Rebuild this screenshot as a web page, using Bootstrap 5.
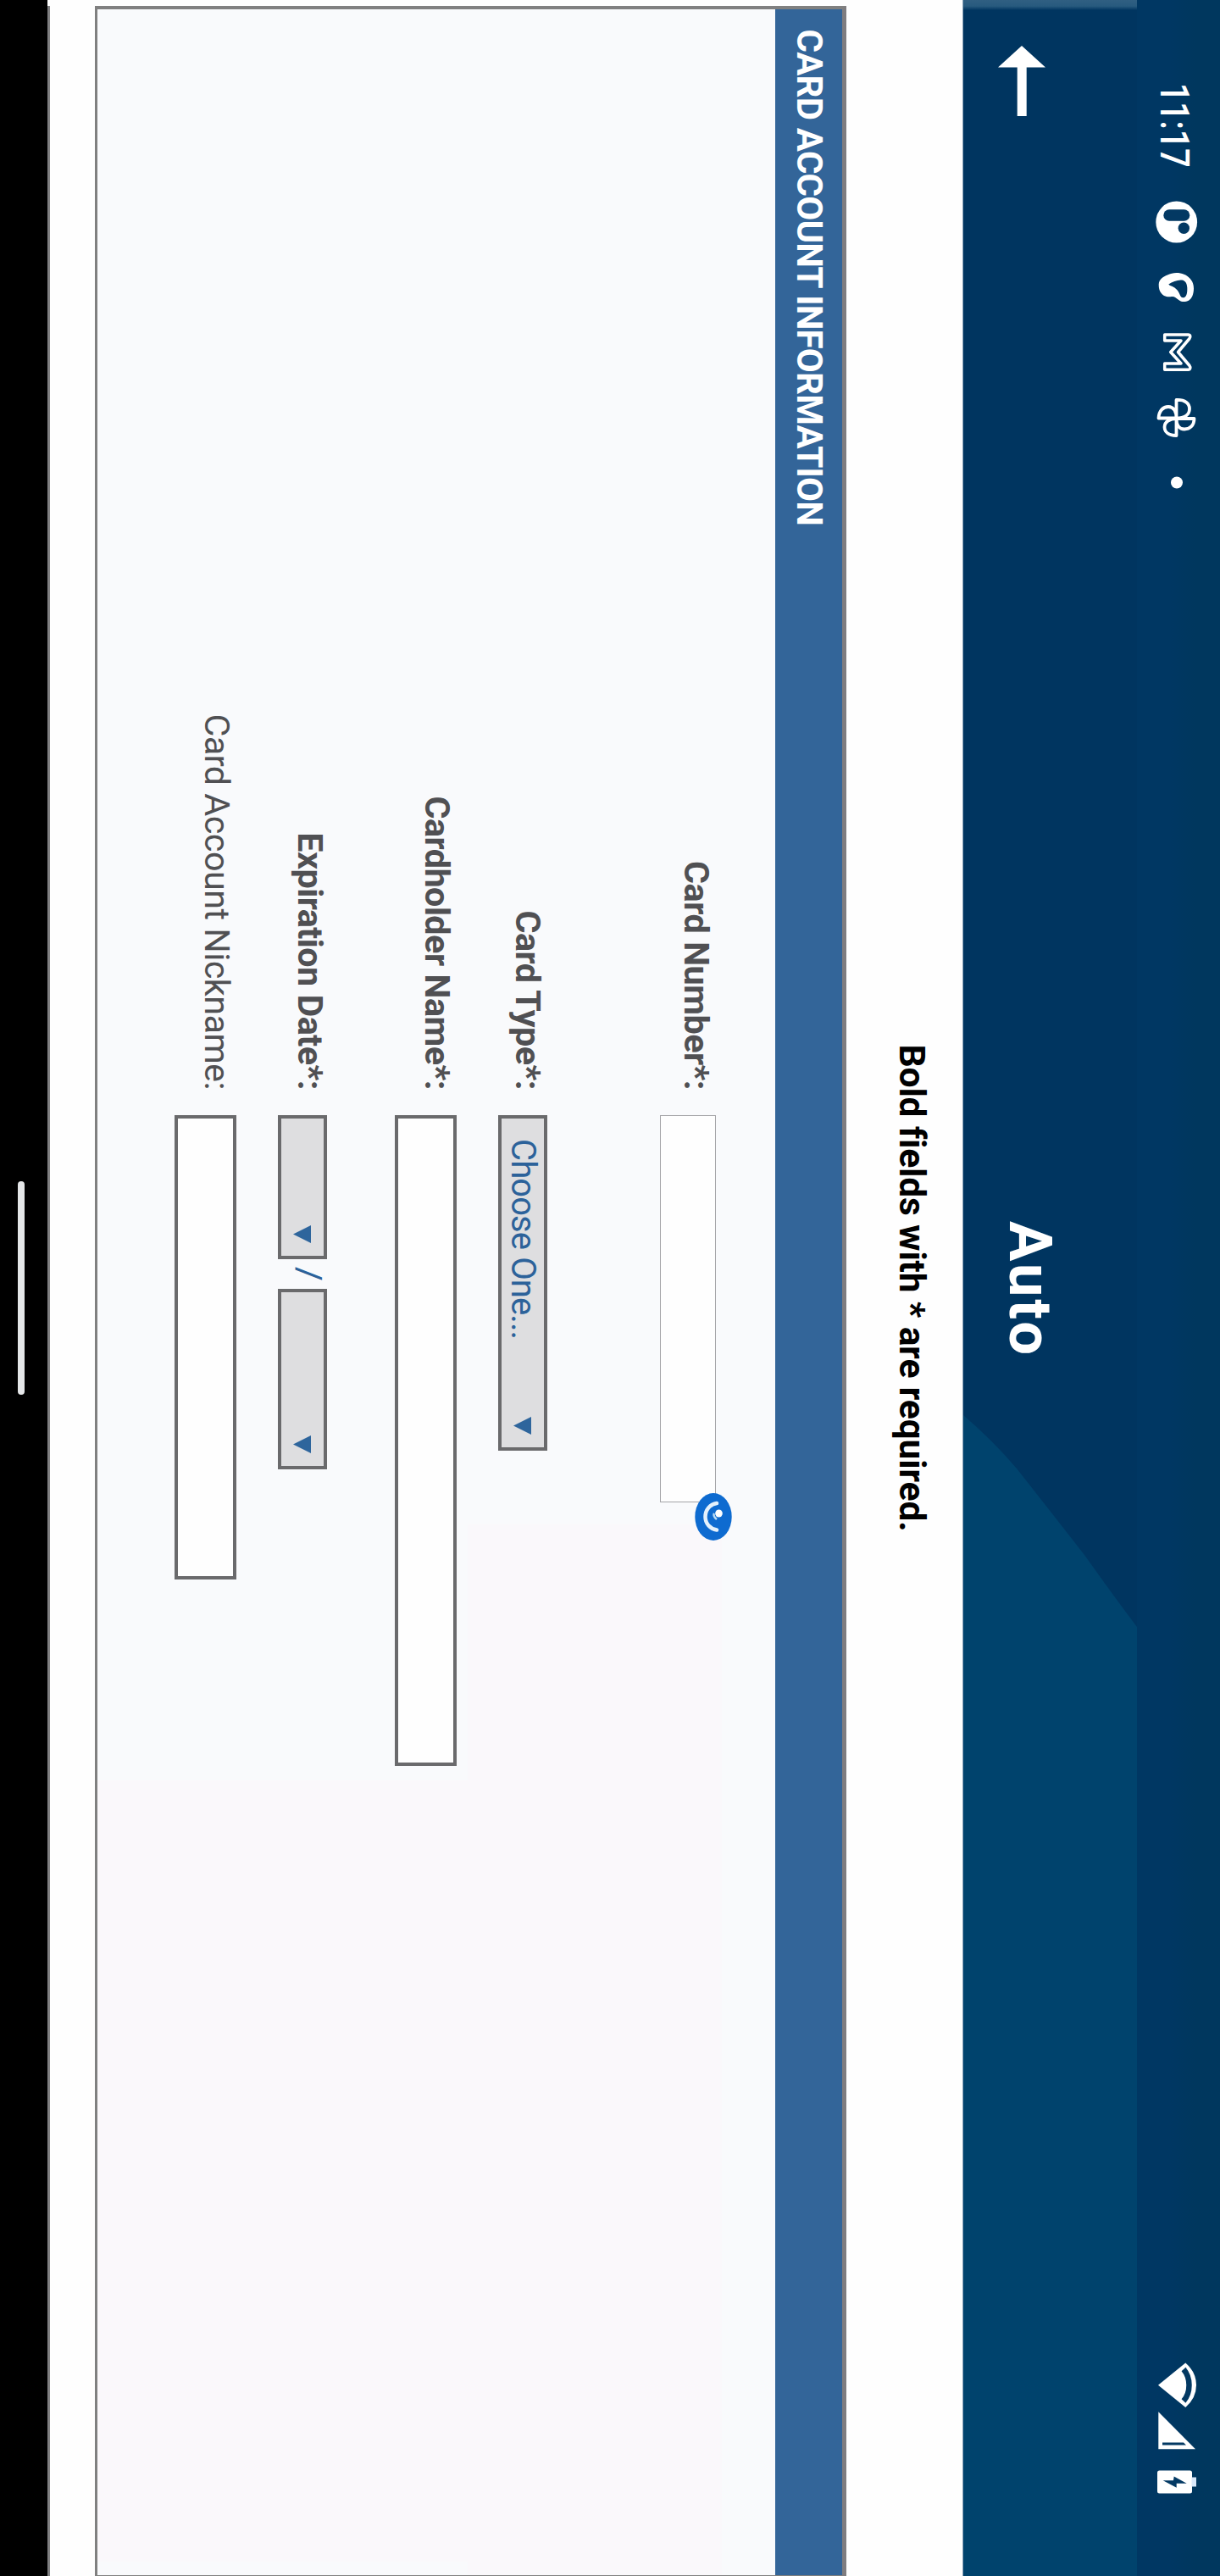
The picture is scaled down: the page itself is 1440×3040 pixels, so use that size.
<!DOCTYPE html>
<html lang="en">
<head>
<meta charset="utf-8">
<title>Auto - Card Account Information</title>
<link rel="stylesheet" href="https://cdn.jsdelivr.net/npm/bootstrap@5.3.0/dist/css/bootstrap.min.css">
<style>
html, body { margin: 0; background: #fff; }
body { font-family: Roboto, sans-serif; color: #000; }
/* The device is held sideways: the landscape screen is turned a quarter clockwise. */
.device { width: 1440px; height: 3040px; }
.screen { width: 3040px; height: 1440px; transform-origin: 0 0; transform: translateX(1440px) rotate(90deg); background: #fefefe; white-space: nowrap; }
.screen svg { display: block; flex: none; }
.status-bar { height: 98px; background: linear-gradient(#00375e 0 30%, #003763 60%); color: #fff; padding-left: 97.500px; }
.clock { font-size: 48px; font-weight: 500; line-height: 56px; width: 100px; margin-top: 26px; }
.clock span { display: inline-block; transform: scaleX(.817); transform-origin: 0 50%; }
.app-bar { height: 206px; background: #003560; color: #fff; border-bottom: 1px solid #8ca3b9; }
.app-bar .swoosh { position: absolute; inset: 0; }
.app-title { font-size: 70.500px; font-weight: 700; line-height: 80px; letter-spacing: 3px; padding-top: 86px; padding-left: 3px; }
.back { left: 54px; top: 108px; }
.notice { height: 137px; font-size: 42.500px; font-weight: 700; line-height: 120px; letter-spacing: -.090px; }
.panel { margin-left: 7px; height: 887px; border: 3px solid #808080; border-top: 5px solid #7f7d80; border-left-width: 4px; border-right-width: 1px;
  background: linear-gradient(#faf8fb, #faf8fb) 2090px 100% / 922px 725px no-repeat,
    linear-gradient(#faf8fb, #faf8fb) 100% 142px / 1240px 300px no-repeat, #f9fafc; }
.panel-title { height: 79px; line-height: 77px; padding-left: 23.500px; background: #336599; color: #fff; font-size: 42px; font-weight: 700; letter-spacing: -.800px; }
.label-col { width: 1275px; margin-right: 30px; padding-top: 2px; text-align: right; font-size: 41.300px; font-weight: 700; line-height: 42px; letter-spacing: -.500px; color: #505053; }
.label-plain { font-weight: 400; letter-spacing: -.520px; }
.box { height: 73px; border: 4px solid #6a6a6c; background: #fefefe; }
.pick { height: 58px; border: 4px solid #6a6a6c; background: #dedee0; color: #2c629a; font-size: 40px; line-height: 50px; letter-spacing: -.900px; }
.r-number { margin-top: 70px; height: 66px; }
.r-type { margin-top: 133px; height: 58px; }
.r-holder { margin-top: 49px; height: 73px; }
.r-date { margin-top: 80px; height: 58px; }
.r-date .label-col { margin-top: -1px; padding-top: 0; }
.r-nick { margin-top: 49px; height: 73px; }
.box-number { width: 457px; height: 66px; border: 1px solid #a5a5a8; }
.eye { right: -46px; top: -20px; }
.slash { width: 35px; text-align: center; color: #2c629a; font-size: 41px; line-height: 42px; }
.foot-gap { height: 53px; }
.foot-line { height: 3px; margin-left: 7px; background: #808082; }
.gesture { height: 56px; background: #000; padding-top: 21px; }
.pill { width: 252px; height: 8px; border-radius: 4px; background: #e4e6e8; margin-top: 6px; }
</style>
<script src="https://cdn.jsdelivr.net/npm/bootstrap@5.3.0/dist/js/bootstrap.bundle.min.js"></script>
</head>
<body>
<div class="device overflow-hidden">
<main class="screen d-flex flex-column">
  <header class="status-bar d-flex flex-shrink-0">
    <div class="clock"><span>11:17</span></div>
    <svg width="2842" height="98" viewBox="197.500 0 2842 98" fill="none">
      <ellipse cx="261.500" cy="51.300" rx="24.500" ry="24.400" fill="#fff"/>
      <rect x="246.800" y="35.700" width="13.400" height="31" rx="6.700" fill="#033963"/>
      <circle cx="268.700" cy="42.700" r="6.700" fill="#033963"/>
      <path fill="#fff" fill-rule="evenodd" d="M321.500 51.500C321.500 45 324 39 327 36.700C331 32 336 31 340 31C347 31 352 33.500 354 36.700C356 41 356 45 354 48C351 52 349 54 349.500 57C350 60 350 63 348.500 66C345 71 341 72.300 335 72.300C329 72 326 67 324 62C322.500 59 321.500 55 321.500 51.500ZM335 60.700C332 56 329.500 50 330 45C330.500 41 334 39 339 38.700C344 38.500 349 39 350.500 42C351.500 45 350 46.500 347 47.500C342 49.500 340 52 338.700 54C337 57 336.500 60 335 60.700Z"/>
      <path stroke="#fff" stroke-width="3.500" stroke-linejoin="round" d="M394.500 65.300V37.500C394.500 35 397 34.500 399 36L415 49.500L431 36C433 34.500 435.700 35 435.700 37.500V65.300H428.500V46L415 58.300L401.500 46V65.300Z"/>
      <path stroke="#fff" stroke-width="3.800" stroke-linejoin="round" d="M471.500 51.500C471 41 476 36 482 36C489 36 493 42 493 51.500ZM493.500 51.500V30.500C502 30.500 506 36 506 42C506 48 501 51.500 493.500 51.500ZM493.500 51.500H513.500C513.500 61 509 65.500 503.500 65.500C497 65.500 493.500 59 493.500 51.500ZM493 51.500V72.500C484 72 479.500 67 479.500 61C479.500 55 485 51.500 493 51.500Z"/>
      <circle cx="569" cy="51" r="7" fill="#fff"/>
      <path fill="#fff" d="M2814.300 73L2788 40.700Q2799 28 2814.300 28T2840.500 40.700Z"/>
      <path stroke="#033963" stroke-width="6.500" d="M2795.500 43Q2803 36.500 2814.300 36.500T2833 43"/>
      <path fill="#fff" d="M2845.700 72.700L2889.700 29V72.700Z"/>
      <path fill="#033963" d="M2882 68V43L2885 40V68Z"/>
      <rect x="2915" y="33" width="27" height="41" rx="2.500" fill="#fff"/>
      <rect x="2923" y="28" width="11" height="5.500" fill="#d9e9fb"/>
      <path fill="#033963" d="M2926.700 67.300V55L2922 54.300L2930.300 39.300V51.300H2935.300Z"/>
    </svg>
  </header>

  <section class="app-bar position-relative flex-shrink-0">
    <svg class="swoosh" width="3040" height="205" viewBox="0 98 3040 205">
      <defs><linearGradient id="edge"><stop offset="0" stop-color="#305f82"/><stop offset=".6" stop-color="#285a7e"/><stop offset="1" stop-color="#003560"/></linearGradient></defs>
      <path fill="#00436d" d="M1670 303Q1700 268 1733 240Q1785 199 1835 160Q1880 128 1920 98H3040V303Z"/>
      <rect y="98" width="12" height="205" fill="url(#edge)"/>
    </svg>
    <svg class="back position-absolute" width="83" height="56" viewBox="0 0 83 56"><path fill="#fff" d="M0 28L25.500 0V22.300H83V33.300H25.500V56Z"/></svg>
    <h1 class="app-title position-relative text-center m-0">Auto</h1>
  </section>

  <p class="notice text-center m-0 flex-shrink-0">Bold fields with * are required.</p>

  <form class="panel flex-shrink-0">
    <div class="panel-title">CARD ACCOUNT INFORMATION</div>
    <div class="r-number d-flex align-items-start">
      <label class="label-col">Card Number*:</label>
      <div class="box-number box position-relative">
        <svg class="eye position-absolute" width="56" height="44" viewBox="0 0 56 44">
          <ellipse cx="28" cy="22" rx="28" ry="21.700" fill="#0e6bd0"/>
          <path d="M12 18C13 26 20 31.500 28 31.500S42 26 43.500 18" fill="none" stroke="#e4f1fc" stroke-width="4.500" stroke-linecap="round"/>
          <ellipse cx="24" cy="15.500" rx="4.500" ry="4.300" fill="#fff"/>
          <path d="M24 21Q27 23 31 18" fill="none" stroke="#b9dcf5" stroke-width="2.500"/>
        </svg>
      </div>
    </div>
    <div class="r-type d-flex align-items-start">
      <label class="label-col">Card Type*:</label>
      <div class="pick d-flex justify-content-between align-items-center" style="width:396px;padding-left:24px;padding-right:15px"><span>Choose One...</span>
        <svg width="21" height="21" viewBox="0 0 21 21"><path fill="#2e659c" d="M0 0H21L10.500 21Z"/></svg></div>
    </div>
    <div class="r-holder d-flex align-items-start">
      <label class="label-col">Cardholder Name*:</label>
      <div class="box" style="width:768px"></div>
    </div>
    <div class="r-date d-flex align-items-start">
      <label class="label-col">Expiration Date*:</label>
      <div class="pick d-flex justify-content-end align-items-center" style="width:170px;padding-right:15px"><svg width="21" height="21" viewBox="0 0 21 21"><path fill="#2e659c" d="M0 0H21L10.500 21Z"/></svg></div>
      <span class="slash">/</span>
      <div class="pick d-flex justify-content-end align-items-center" style="width:213px;padding-right:15px"><svg width="21" height="21" viewBox="0 0 21 21"><path fill="#2e659c" d="M0 0H21L10.500 21Z"/></svg></div>
    </div>
    <div class="r-nick d-flex align-items-start">
      <label class="label-col label-plain">Card Account Nickname:</label>
      <div class="box" style="width:548px"></div>
    </div>
  </form>

  <div class="foot-gap flex-shrink-0"></div>
  <div class="foot-line flex-shrink-0"></div>
  <footer class="gesture d-flex justify-content-center flex-shrink-0"><div class="pill"></div></footer>
</main>
</div>
</body>
</html>
